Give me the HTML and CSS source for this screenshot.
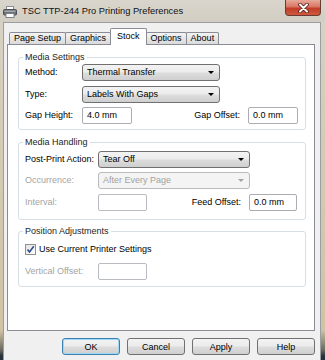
FILE: index.html
```html
<!DOCTYPE html>
<html lang="en">
<head>
    <meta charset="UTF-8">
    <meta name="viewport" content="width=device-width, initial-scale=1.0">
    <title>TSC TTP-244 Pro Printing Preferences</title>
    <link rel="stylesheet" href="styles.css">
</head>
<body>

    <div class="window">

        <!-- Title bar -->
        <div class="title-bar">
            <svg class="printer-icon" width="14" height="12" viewBox="0 0 14 12">
                <rect x="3.5" y="0.5" width="7" height="4" fill="#fff" stroke="#8a8d92"/>
                <rect x="0.5" y="3.5" width="13" height="5.5" rx="1" fill="#6d7278" stroke="#4a4e54"/>
                <rect x="1.5" y="4.5" width="11" height="1.5" fill="#a3a8ae"/>
                <rect x="3" y="7.5" width="8" height="4" fill="#fff" stroke="#7d8186"/>
            </svg>
            <span class="title">TSC TTP-244 Pro Printing Preferences</span>
            <div class="close-btn">
                <svg width="11" height="10" viewBox="0 0 11 10">
                    <path d="M2 1.5 L9 8.5 M9 1.5 L2 8.5" stroke="#5a1d15" stroke-width="3.6" stroke-linecap="round"/>
                    <path d="M2 1.5 L9 8.5 M9 1.5 L2 8.5" stroke="#fff" stroke-width="2" stroke-linecap="round"/>
                </svg>
            </div>
        </div>

        <div class="client">

            <!-- Tabs -->
            <div class="tabs">
                <div class="tab">Page Setup</div>
                <div class="tab">Graphics</div>
                <div class="tab active">Stock</div>
                <div class="tab">Options</div>
                <div class="tab">About</div>
            </div>

            <div class="tab-panel">

                <fieldset class="group group-settings">
                    <legend>Media Settings</legend>
                    <div class="row">
                        <span class="label label-short">Method:</span>
                        <div class="combo combo-short">Thermal Transfer<span class="arrow"></span></div>
                    </div>
                    <div class="row">
                        <span class="label label-short">Type:</span>
                        <div class="combo combo-short">Labels With Gaps<span class="arrow"></span></div>
                    </div>
                    <div class="row">
                        <span class="label label-short">Gap Height:</span>
                        <div class="field">4.0 mm</div>
                        <span class="label label-right">Gap Offset:</span>
                        <div class="field">0.0 mm</div>
                    </div>
                </fieldset>

                <fieldset class="group group-handling">
                    <legend>Media Handling</legend>
                    <div class="row">
                        <span class="label label-long">Post-Print Action:</span>
                        <div class="combo combo-long">Tear Off<span class="arrow"></span></div>
                    </div>
                    <div class="row">
                        <span class="label label-long disabled">Occurrence:</span>
                        <div class="combo combo-long disabled">After Every Page<span class="arrow"></span></div>
                    </div>
                    <div class="row">
                        <span class="label label-long disabled">Interval:</span>
                        <div class="field field-disabled"></div>
                        <span class="label label-right">Feed Offset:</span>
                        <div class="field field-feed">0.0 mm</div>
                    </div>
                </fieldset>

                <fieldset class="group group-position">
                    <legend>Position Adjustments</legend>
                    <label class="check-row">
                        <span class="checkbox">
                            <svg width="9" height="9" viewBox="0 0 9 9">
                                <path d="M1.5 4.5 L3.5 7 L7.8 1.2" fill="none" stroke="#2f4b8f" stroke-width="1.6"/>
                            </svg>
                        </span>
                        Use Current Printer Settings
                    </label>
                    <div class="row">
                        <span class="label label-long disabled">Vertical Offset:</span>
                        <div class="field field-disabled"></div>
                    </div>
                </fieldset>

            </div>

            <!-- Dialog buttons -->
            <div class="buttons">
                <button class="btn btn-default">OK</button>
                <button class="btn">Cancel</button>
                <button class="btn">Apply</button>
                <button class="btn">Help</button>
            </div>

        </div>
    </div>

</body>
</html>
```

FILE: styles.css
```css
/* Reset default margin and padding */
* {
    margin: 0;
    padding: 0;
    box-sizing: border-box;
}

body {
    width: 325px;
    height: 360px;
    overflow: hidden;
    font-family: "Liberation Sans", Arial, sans-serif;
    font-size: 9px;
    line-height: 11px;
    color: #000;
}

.window {
    height: 100%;
    display: flex;
    flex-direction: column;
    background: linear-gradient(to bottom, #d8d3c8 0, #d6cebb 80px, #d0c3a5 330px, #6d6a60 350px, #26313c 356px);
}

/* Title bar */
.title-bar {
    height: 22px;
    display: flex;
    align-items: center;
    background: linear-gradient(to bottom, #d9d5cc, #d3cec3);
}

.printer-icon {
    margin-left: 3px;
    margin-top: 2px;
}

.title {
    margin-left: 5px;
    font-size: 9.3px;
    color: #111;
}

.close-btn {
    margin-left: auto;
    margin-right: 4px;
    align-self: flex-start;
    width: 36px;
    height: 16px;
    display: flex;
    align-items: center;
    justify-content: center;
    border: 1px solid #6e3a30;
    border-top: none;
    border-radius: 0 0 4px 4px;
    background: linear-gradient(to bottom, #e8a899 0%, #d77762 45%, #c23d28 55%, #cd5a3e 100%);
}

/* Client area */
.client {
    flex: 1;
    margin: 0 4px 0 3px;
    padding: 0 5px 0 3px;
    background-color: #f0f0f0;
    border: 1px solid #9b9d9f;
    border-bottom: none;
}

.tabs {
    height: 22px;
    margin-bottom: -1px;
    padding-left: 2px;
    display: flex;
    align-items: flex-end;
    position: relative;
    z-index: 1;
}

.tab {
    height: 12px;
    margin-bottom: 1px;
    margin-right: -1px;
    padding: 0 4px;
    line-height: 11px;
    border: 1px solid #898c95;
    border-bottom: none;
    border-radius: 2px 2px 0 0;
    background: linear-gradient(to bottom, #f4f4f4, #e6e6e6 50%, #dadada);
}

.tab.active {
    height: 17px;
    margin-bottom: 0;
    padding: 2px 6px 0;
    background: #fff;
    position: relative;
    z-index: 2;
}

.tab-panel {
    height: 287px;
    padding: 1px 8px 0 10px;
    background-color: #fff;
    border: 1px solid #898c95;
}

/* Group boxes */
.group {
    border: 1px solid #d5dfe5;
    border-radius: 3px;
    padding: 1px 7px 5px 6px;
    margin-top: 6px;
}

.group legend {
    margin-left: -2px;
    padding: 0 2px;
    line-height: 11px;
    color: #1e1e1e;
}

.group-handling {
    padding-top: 2.5px;
    padding-bottom: 8px;
    margin-top: 7px;
}

.group-position {
    padding-top: 6.5px;
    padding-bottom: 6.5px;
}

.row {
    height: 17px;
    display: flex;
    align-items: center;
    margin-bottom: 4.5px;
}

.row:last-child {
    margin-bottom: 0;
}

.label {
    flex-shrink: 0;
}

.label-short {
    width: 57px;
}

.label-long {
    width: 73px;
}

.label-right {
    margin-left: auto;
    margin-right: 8px;
}

.disabled {
    color: #a3a3a3;
}

/* Drop-down boxes */
.combo {
    height: 17px;
    display: flex;
    align-items: center;
    justify-content: space-between;
    padding: 0 4px 0 4px;
    border: 1px solid #707070;
    border-radius: 3px;
    background: linear-gradient(to bottom, #f3f3f3 0%, #ebebeb 48%, #dddddd 52%, #cfcfcf 100%);
}

.combo-short {
    width: 138px;
}

.combo-long {
    width: 152px;
}

.combo .arrow {
    width: 0;
    height: 0;
    border-left: 3px solid transparent;
    border-right: 3px solid transparent;
    border-top: 3px solid #000;
    margin-right: 1px;
}

.combo.disabled {
    border-color: #b8bcbf;
    background: #f4f4f4;
}

.combo.disabled .arrow {
    border-top-color: #a3a3a3;
}

/* Text boxes */
.field {
    width: 50px;
    height: 17px;
    padding: 0 4px;
    display: flex;
    align-items: center;
    background-color: #fff;
    border: 1px solid #abadb3;
    border-radius: 2px;
}

.field-disabled {
    width: 49px;
    border-color: #b9bcc0;
}

.field-feed {
    width: 48px;
    margin-right: 1px;
}

/* Checkbox */
.check-row {
    height: 13px;
    display: flex;
    align-items: center;
    margin-bottom: 6.5px;
}

.checkbox {
    width: 11px;
    height: 11px;
    margin-right: 3px;
    display: flex;
    align-items: center;
    justify-content: center;
    border: 1px solid #8e8f8f;
    background: linear-gradient(135deg, #e4e4e4, #fdfdfd);
}

/* Dialog buttons */
.buttons {
    display: flex;
    justify-content: flex-end;
    gap: 7px;
    margin-top: 7px;
}

.btn {
    width: 58px;
    height: 17px;
    font-family: inherit;
    font-size: 9px;
    color: #000;
    border: 1px solid #707070;
    border-radius: 3px;
    background: linear-gradient(to bottom, #f3f3f3 0%, #ebebeb 48%, #dddddd 52%, #cfcfcf 100%);
}

.btn-default {
    border-color: #3c7fb1;
    box-shadow: inset 0 0 0 1px #9fd8f5;
}
```
